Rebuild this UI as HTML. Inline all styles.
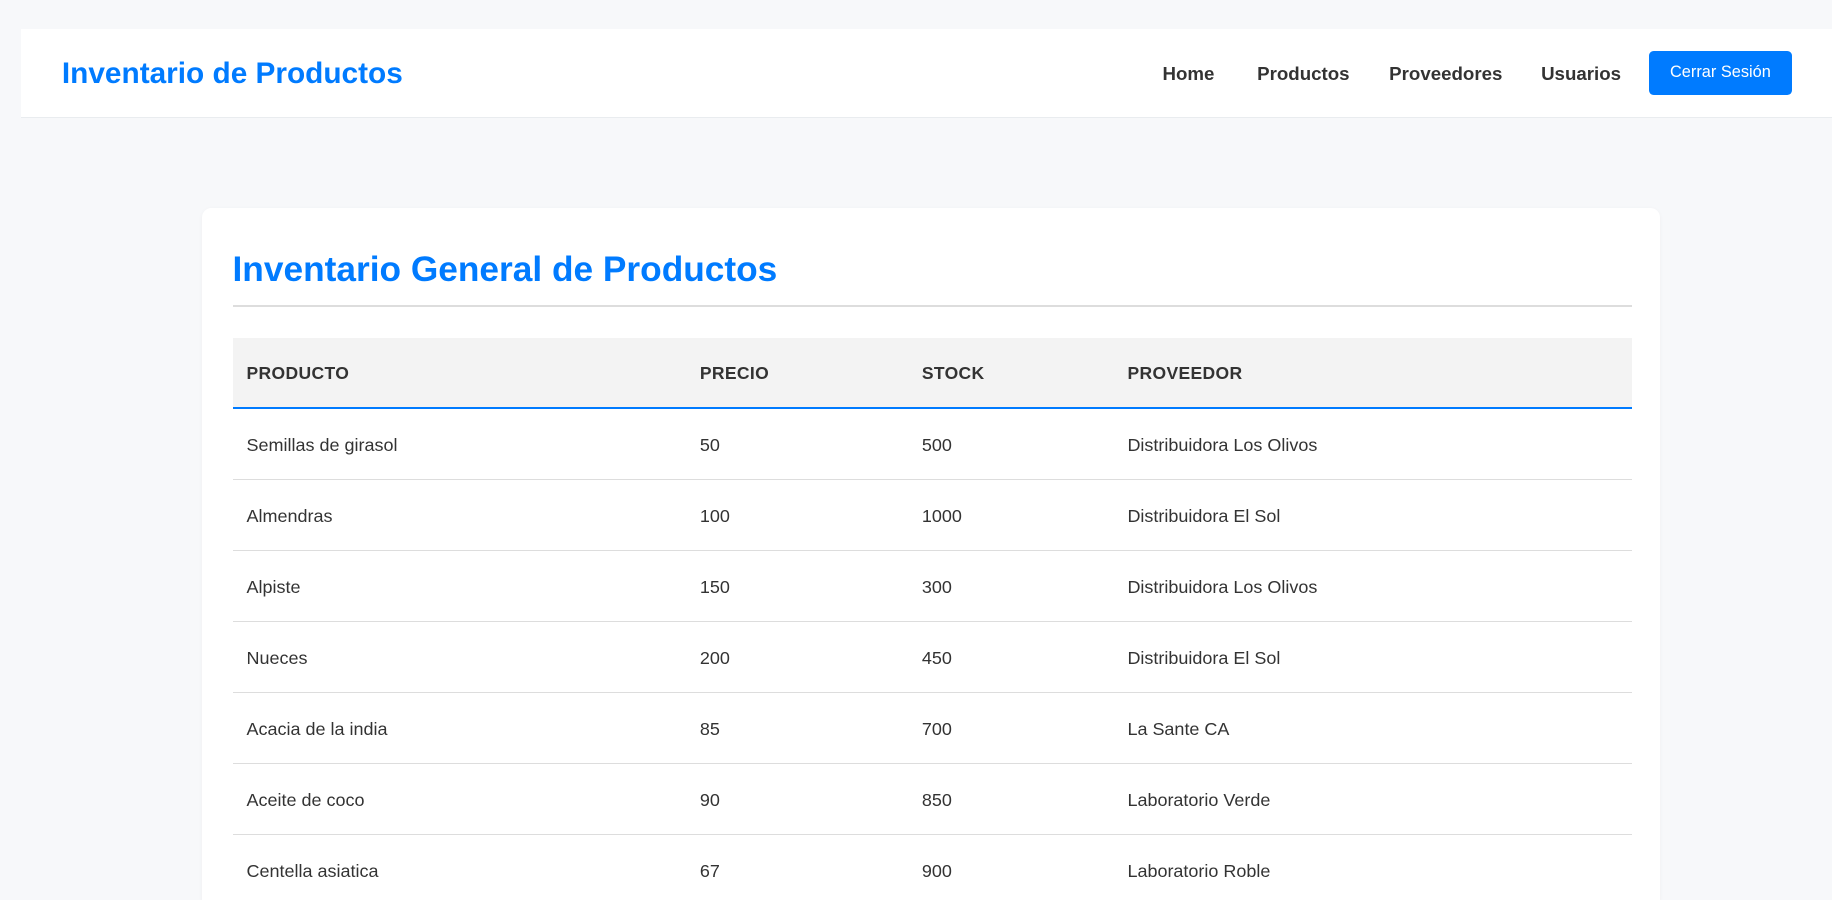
<!DOCTYPE html>
<html><head><meta charset="utf-8"><style>
html{zoom:1.16837;overflow:hidden}
body{margin:0;background:#f7f8fa;font-family:"Liberation Sans",sans-serif;color:#333;width:1568px;height:770px;overflow:hidden;position:relative}
.nav{position:absolute;left:18px;top:25px;width:1550px;height:75px;background:#fff;border-bottom:1px solid #e9ecef}
.brand{position:absolute;left:35px;top:24px;font-size:25.5px;font-weight:bold;color:#007bff}
.nav a{position:absolute;top:29px;font-size:16px;font-weight:bold;color:#333;text-decoration:none}
.btn{position:absolute;left:1393px;top:19px;width:123px;height:37px;background:#007bff;border-radius:4px;color:#fff;font-size:14px;text-align:center;line-height:37px}
.card{position:absolute;left:173px;top:178px;width:1248px;height:592px;overflow:hidden;background:#fff;border-radius:8px 8px 0 0;box-shadow:0 1px 4px rgba(0,0,0,.04)}
h1{position:absolute;left:26px;top:36px;margin:0;font-size:30.2px;color:#007bff;font-weight:bold}
.hr{position:absolute;left:26px;top:83px;width:1198px;height:2px;background:#ddd}
table{position:absolute;left:26px;top:111px;width:1198px;border-collapse:collapse;font-size:15.4px}
th{background:#f3f3f3;height:57px;text-align:left;font-size:15px;font-weight:bold;letter-spacing:.3px;border-bottom:2px solid #007bff;padding:2px 0 0 12px}
td{height:57px;border-bottom:1px solid #ddd;padding:3px 0 0 12px}
</style></head><body>
<div class="nav"><div class="brand">Inventario de Productos</div>
<a style="left:977px">Home</a><a style="left:1058px">Productos</a><a style="left:1171px">Proveedores</a><a style="left:1301px">Usuarios</a>
<div class="btn">Cerrar Sesión</div></div>
<div class="card"><h1>Inventario General de Productos</h1><div class="hr"></div>
<table><colgroup><col style="width:388px"><col style="width:190px"><col style="width:176px"><col></colgroup>
<tr><th>PRODUCTO</th><th>PRECIO</th><th>STOCK</th><th>PROVEEDOR</th></tr>
<tr><td>Semillas de girasol</td><td>50</td><td>500</td><td>Distribuidora Los Olivos</td></tr>
<tr><td>Almendras</td><td>100</td><td>1000</td><td>Distribuidora El Sol</td></tr>
<tr><td>Alpiste</td><td>150</td><td>300</td><td>Distribuidora Los Olivos</td></tr>
<tr><td>Nueces</td><td>200</td><td>450</td><td>Distribuidora El Sol</td></tr>
<tr><td>Acacia de la india</td><td>85</td><td>700</td><td>La Sante CA</td></tr>
<tr><td>Aceite de coco</td><td>90</td><td>850</td><td>Laboratorio Verde</td></tr>
<tr><td>Centella asiatica</td><td>67</td><td>900</td><td>Laboratorio Roble</td></tr>
</table></div>
</body></html>
